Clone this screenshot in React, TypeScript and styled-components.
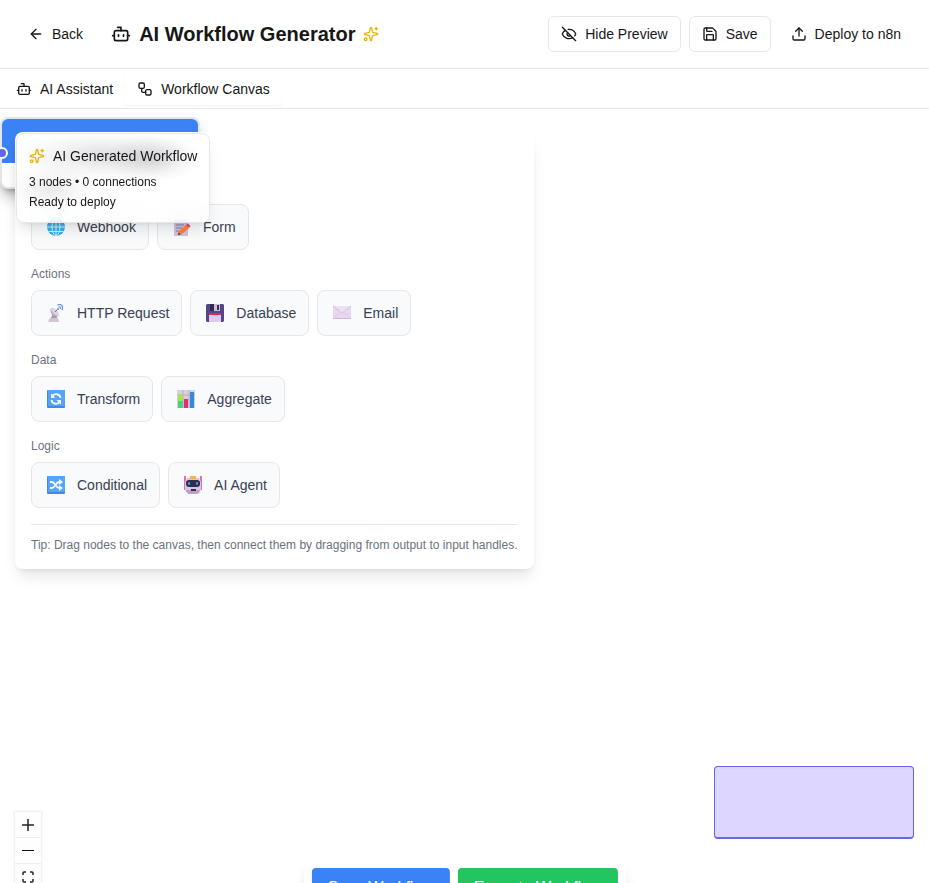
import React from "react";
import styled, { createGlobalStyle } from "styled-components";
import { ArrowLeft, Bot, EyeOff, Save, Sparkles, Upload, Workflow } from "lucide-react";

const GlobalStyle = createGlobalStyle`
  *, *::before, *::after { box-sizing: border-box; }
  body {
    margin: 0;
    overflow: hidden;
    background: #fff;
    color: #171717;
    font-family: "Liberation Sans", Arial, sans-serif;
    font-size: 14px;
    line-height: 20px;
  }
  button { font: inherit; color: inherit; cursor: pointer; }
  h1, h2, h3, p { margin: 0; }
  svg { display: block; flex-shrink: 0; }
`;

const Page = styled.div`
  display: flex;
  flex-direction: column;
  height: 100vh;
`;

const Header = styled.header`
  display: flex;
  align-items: center;
  justify-content: space-between;
  padding: 16px;
  border-bottom: 1px solid #e5e5ea;
`;

const HeaderGroup = styled.div<{ $gap: number }>`
  display: flex;
  align-items: center;
  gap: ${(p) => p.$gap}px;
`;

const HeaderButton = styled.button<{ $outlined?: boolean }>`
  display: inline-flex;
  align-items: center;
  gap: 8px;
  height: 36px;
  padding: 0 12px;
  border: ${(p) => (p.$outlined ? "1px solid #e5e7eb" : "0")};
  border-radius: 6px;
  background: transparent;
  white-space: nowrap;
`;

const Title = styled.h1`
  display: flex;
  align-items: center;
  gap: 8px;
  font-size: 20px;
  line-height: 28px;
  font-weight: 700;
  white-space: nowrap;
`;

const Tabs = styled.nav`
  display: flex;
  padding: 3px 4px;
  border-bottom: 1px solid #e5e5ea;
`;

const Tab = styled.button<{ $active?: boolean }>`
  display: inline-flex;
  align-items: center;
  gap: 8px;
  height: 33px;
  padding: 0 12px;
  border: 0;
  border-radius: 4px;
  background: #fff;
  box-shadow: ${(p) => (p.$active ? "0 1px 2px rgba(0, 0, 0, 0.05)" : "none")};
`;

const Canvas = styled.main`
  position: relative;
  flex: 1;
  background: #fff;
`;

const FlowNode = styled.div`
  position: absolute;
  top: 8px;
  left: 0;
  width: 200px;
  height: 72px;
  border: 2px solid #e2e5ea;
  border-radius: 8px;
  background: #fff;
  box-shadow: 0 10px 15px -3px rgba(0, 0, 0, 0.3), 0 4px 6px -4px rgba(0, 0, 0, 0.4);
`;

const NodeHeader = styled.div`
  height: 44px;
  border-radius: 6px 6px 0 0;
  background: #3b82f6;
`;

const NodeHandle = styled.span`
  position: absolute;
  top: 28px;
  left: -6px;
  width: 12px;
  height: 12px;
  border: 2px solid #fff;
  border-radius: 50%;
  background: #6366f1;
`;

const Palette = styled.section`
  position: absolute;
  top: 23px;
  left: 15px;
  display: flex;
  flex-direction: column;
  gap: 16px;
  padding: 48px 16px 16px;
  border-radius: 8px;
  background: #fff;
  box-shadow: 0 10px 15px -3px rgba(0, 0, 0, 0.1), 0 4px 6px -4px rgba(0, 0, 0, 0.1);
`;

const Group = styled.div`
  display: flex;
  flex-direction: column;
  gap: 8px;
`;

const GroupLabel = styled.h3`
  min-height: 16px;
  color: #6b7280;
  font-size: 12px;
  line-height: 16px;
  font-weight: 400;
`;

const ChipRow = styled.div`
  display: flex;
  gap: 8px;
`;

const Chip = styled.button`
  display: inline-flex;
  align-items: center;
  gap: 8px;
  height: 46px;
  padding: 0 12px;
  border: 1px solid #e5e7eb;
  border-radius: 8px;
  background: #f9fafb;
  color: #374151;
`;

const ChipIcon = styled.span`
  width: 25px;
  padding-left: 3px;
`;

const Tip = styled.p`
  padding-top: 12px;
  border-top: 1px solid #e5e7eb;
  color: #6b7280;
  font-size: 12px;
  line-height: 16px;
`;

const StatusCard = styled.aside`
  position: absolute;
  top: 24px;
  left: 16px;
  display: flex;
  flex-direction: column;
  gap: 4px;
  padding: 12px;
  border: 1px solid #e5e7eb;
  border-radius: 8px;
  background:
    radial-gradient(ellipse 48px 24px at 136px 24px, rgba(40, 45, 60, 0.16), rgba(40, 45, 60, 0.05) 60%, transparent),
    radial-gradient(ellipse 88px 24px at 88px 22px, rgba(40, 45, 60, 0.16), rgba(40, 45, 60, 0.05) 60%, transparent),
    radial-gradient(ellipse 44px 24px at 36px 54px, rgba(40, 45, 60, 0.1), rgba(40, 45, 60, 0.03) 60%, transparent),
    rgba(255, 255, 255, 0.7);
  backdrop-filter: blur(8px);
  box-shadow: 0 10px 15px -3px rgba(0, 0, 0, 0.1), 0 4px 6px -4px rgba(0, 0, 0, 0.1);
  font-size: 12px;
  line-height: 16px;
`;

const StatusTitle = styled.h2`
  display: flex;
  align-items: center;
  gap: 8px;
  margin-bottom: 4px;
  font-size: 14px;
  line-height: 20px;
  font-weight: 400;
`;

const Controls = styled.div`
  position: absolute;
  bottom: -33px;
  left: 15px;
  display: flex;
  flex-direction: column;
  box-shadow: 0 0 2px 1px rgba(0, 0, 0, 0.08);
`;

const ControlButton = styled.button`
  display: grid;
  place-items: center;
  width: 26px;
  height: 26px;
  padding: 0;
  border: 0;
  border-bottom: 1px solid #eee;
  background: #fefefe;
`;

const MiniMap = styled.div`
  position: absolute;
  right: 15px;
  bottom: 44px;
  width: 200px;
  height: 73px;
  border: 1px solid #6366f1;
  border-bottom-width: 2px;
  border-radius: 4px;
  background: #ddd6fe;
`;

const ActionBar = styled.div`
  position: absolute;
  bottom: -33px;
  left: 50%;
  display: flex;
  gap: 8px;
  padding: 8px;
  border-radius: 8px;
  background: #fff;
  box-shadow: 0 10px 15px -3px rgba(0, 0, 0, 0.1), 0 4px 6px -4px rgba(0, 0, 0, 0.1);
  transform: translateX(-50%);
`;

const ActionButton = styled.button<{ $color: string }>`
  padding: 8px 16px;
  border: 0;
  border-radius: 4px;
  background: ${(p) => p.$color};
  color: #fff;
  font-size: 16px;
  line-height: 24px;
  white-space: nowrap;
`;

function Glyph({ children }: { children: React.ReactNode }) {
  return (
    <svg width="18" height="18" viewBox="0 0 18 18" fill="none" aria-hidden="true">
      {children}
    </svg>
  );
}

const Globe = () => (
  <Glyph>
    <circle cx="9" cy="9" r="9" fill="#35aee8" />
    <g stroke="#c9f1ff" strokeWidth="1">
      <ellipse cx="9" cy="9" rx="4" ry="8.5" />
      <path d="M9 0v18M0 9h18M1.5 4.5h15M1.5 13.5h15" />
    </g>
  </Glyph>
);

const Memo = () => (
  <Glyph>
    <path d="M1 1h14v17H1z" fill="#cfc2dc" />
    <path d="M3 4h9M3 7h8M3 10h6M3 13h3" stroke="#8d7c9f" strokeWidth="1.2" />
    <path d="m5 17 1-4 7-6 3 3-7 6z" fill="#ff8139" />
    <path d="m13 7 2-1.500 2.500 2.500L16 10z" fill="#ee4267" />
    <path d="m5 17 .7-2.500 2 2z" fill="#48334a" />
  </Glyph>
);

const Dish = () => (
  <Glyph>
    <path d="M6 9 4 14h6v-4z" fill="#a99aae" />
    <path d="M3 14h8l1 4H1z" fill="#d2c5d8" />
    <path d="M4 4c-2 5 2 10 8 8z" fill="#b9aebe" />
    <path d="M4 4c3-1 9 4 8 8-4 0-8-4-8-8z" fill="#ddd3e1" />
    <path d="m8 8 3-3" stroke="#776d80" />
    <circle cx="11" cy="5" r="1" fill="#8d8497" />
    <path d="M10.500 1c4-2 6 2 4.500 5M11.500 3c2-.5 2 .5 2 2" stroke="#5c94e8" strokeWidth="1.200" />
  </Glyph>
);

const Floppy = () => (
  <Glyph>
    <path d="M1 0h16l1 1v16l-1 1H1l-1-1V1z" fill="#544586" />
    <path d="M4 0h10v7H4z" fill="#cbbfd6" />
    <path d="M4 0h4v7H4z" fill="#352856" />
    <path d="M11 1h2v5h-2z" fill="#3d3058" />
    <path d="M3 9h12v9H3z" fill="#ddcbe9" />
    <path d="M3 9h12v2H3z" fill="#df2855" />
  </Glyph>
);

const Envelope = () => (
  <Glyph>
    <path d="M0 2h18v13H0z" fill="#e6d8ef" />
    <path d="m0 14 7-5M18 14l-7-5" stroke="#dccbe6" />
    <path d="m0 2 9 7 9-7" stroke="#d3c1dd" fill="#ece1f2" />
    <path d="M0 14.500h18" stroke="#d9afe9" />
  </Glyph>
);

const BlueTile = ({ children }: { children: React.ReactNode }) => (
  <Glyph>
    <rect width="18" height="18" rx="1" fill="#408be9" />
    <rect x="1" width="17" height="16" rx="1" fill="#56a4f7" />
    <g stroke="#f6f7ff" strokeWidth="1.8">{children}</g>
  </Glyph>
);

const Cycle = () => (
  <BlueTile>
    <path d="M13.500 8C13 3.500 7 3 5 6.500M4.500 10c.5 4.500 6.500 5 8.500 1.500" />
    <path d="M4 3.500V8h4.500zM14 14.500V10H9.500z" fill="#f6f7ff" stroke="none" />
  </BlueTile>
);

const Shuffle = () => (
  <BlueTile>
    <path d="M3 6h2c3 0 4 6 7 6h1M3 12h2c3 0 4-6 7-6h1" />
    <path d="m12 3 4 3-4 3zM12 9l4 3-4 3z" fill="#f6f7ff" stroke="none" />
  </BlueTile>
);

const Chart = () => (
  <Glyph>
    <path d="M0 0h18v18H0z" fill="#d8cfdf" />
    <path d="M0 5h18M0 10h18M6 0v18M12 0v18" stroke="#b9aec2" />
    <path d="M1 4h5v14H1z" fill="#a5e354" />
    <path d="M1 11h5v7H1z" fill="#4bcd82" />
    <path d="M7 9h4v9H7z" fill="#e42c70" />
    <path d="M13 2h4v16h-4z" fill="#3489df" />
  </Glyph>
);

const Robot = () => (
  <Glyph>
    <path d="M1 0v14M17 0v14" stroke="#e84b82" strokeWidth="1.600" />
    <path d="M3 2h12l2 4v7q-1 5-5 5H6q-4 0-5-5V6z" fill="#d8c5e4" />
    <path d="M2 14q1 4 4 4h6q3 0 4-4z" fill="#baa0cb" />
    <path d="M6 0h6v3H6z" fill="#f4b53c" />
    <rect x="2" y="4" width="14" height="7" rx="3" fill="#332c50" />
    <rect x="4" y="6" width="2" height="3" rx="1" fill="#31a8f2" />
    <rect x="12" y="6" width="2" height="3" rx="1" fill="#31a8f2" />
    <path d="M7 13h5v2H7z" fill="#392b4a" />
  </Glyph>
);

type PaletteGroup = { label: string; items: { name: string; Icon: React.ComponentType }[] };

const groups: PaletteGroup[] = [
  { label: "", items: [{ name: "Webhook", Icon: Globe }, { name: "Form", Icon: Memo }] },
  {
    label: "Actions",
    items: [
      { name: "HTTP Request", Icon: Dish },
      { name: "Database", Icon: Floppy },
      { name: "Email", Icon: Envelope },
    ],
  },
  { label: "Data", items: [{ name: "Transform", Icon: Cycle }, { name: "Aggregate", Icon: Chart }] },
  { label: "Logic", items: [{ name: "Conditional", Icon: Shuffle }, { name: "AI Agent", Icon: Robot }] },
];

export default function App() {
  return (
    <>
      <GlobalStyle />
      <Page>
        <Header>
          <HeaderGroup $gap={16}>
            <HeaderButton>
              <ArrowLeft size={16} />
              Back
            </HeaderButton>
            <Title>
              <Bot size={20} />
              AI Workflow Generator
              <Sparkles size={16} color="#eab308" />
            </Title>
          </HeaderGroup>
          <HeaderGroup $gap={8}>
            <HeaderButton $outlined>
              <EyeOff size={16} />
              Hide Preview
            </HeaderButton>
            <HeaderButton $outlined>
              <Save size={16} />
              Save
            </HeaderButton>
            <HeaderButton>
              <Upload size={16} />
              Deploy to n8n
            </HeaderButton>
          </HeaderGroup>
        </Header>
        <Tabs>
          <Tab>
            <Bot size={16} />
            AI Assistant
          </Tab>
          <Tab $active>
            <Workflow size={16} />
            Workflow Canvas
          </Tab>
        </Tabs>
        <Canvas>
          <FlowNode>
            <NodeHeader />
            <NodeHandle />
          </FlowNode>
          <Palette>
            {groups.map((group, i) => (
              <Group key={i}>
                <GroupLabel as={group.label ? "h3" : "div"}>{group.label}</GroupLabel>
                <ChipRow>
                  {group.items.map(({ name, Icon }) => (
                    <Chip key={name}>
                      <ChipIcon>
                        <Icon />
                      </ChipIcon>
                      {name}
                    </Chip>
                  ))}
                </ChipRow>
              </Group>
            ))}
            <Tip>Tip: Drag nodes to the canvas, then connect them by dragging from output to input handles.</Tip>
          </Palette>
          <StatusCard>
            <StatusTitle>
              <Sparkles size={16} color="#eab308" />
              AI Generated Workflow
            </StatusTitle>
            <p>3 nodes • 0 connections</p>
            <p>Ready to deploy</p>
          </StatusCard>
          <MiniMap />
          <Controls>
            <ControlButton aria-label="Zoom in">
              <svg width="12" height="12" viewBox="0 0 12 12" stroke="#222" strokeWidth="1.500">
                <path d="M6 0v12M0 6h12" />
              </svg>
            </ControlButton>
            <ControlButton aria-label="Zoom out">
              <svg width="12" height="12" viewBox="0 0 12 12" stroke="#111" strokeWidth="1">
                <path d="M0 5.500h12" />
              </svg>
            </ControlButton>
            <ControlButton aria-label="Fit view">
              <svg width="12" height="12" viewBox="0 0 12 12" fill="none" stroke="#222" strokeWidth="1.500">
                <path d="M1 4V2q0-1 1-1h2M8 1h2q1 0 1 1v2M11 8v2q0 1-1 1H8M4 11H2q-1 0-1-1V8" />
              </svg>
            </ControlButton>
            <ControlButton aria-label="Lock canvas">
              <svg width="12" height="12" viewBox="0 0 12 12" fill="none" stroke="#222">
                <path d="M2 5h8v6H2zM4 5V3q0-2 2-2t2 2" />
              </svg>
            </ControlButton>
          </Controls>
          <ActionBar>
            <ActionButton $color="#3b82f6">Save Workflow</ActionButton>
            <ActionButton $color="#22c55e">Execute Workflow</ActionButton>
          </ActionBar>
        </Canvas>
      </Page>
    </>
  );
}
